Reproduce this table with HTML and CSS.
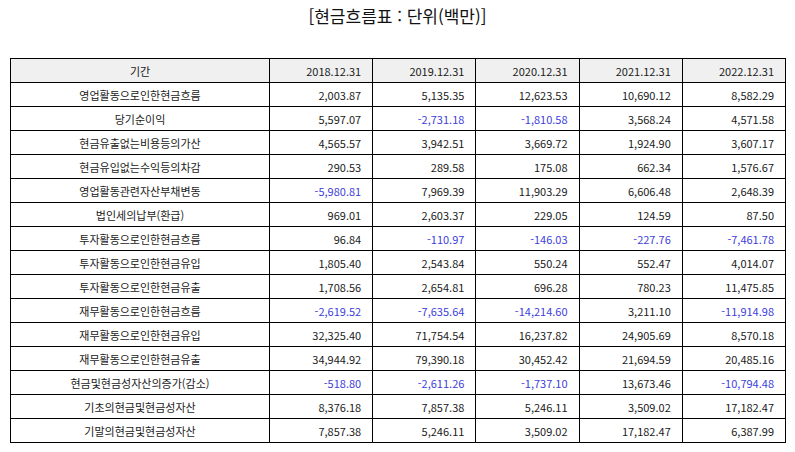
FILE: index.html
```html
<!DOCTYPE html>
<html lang="ko">
<head>
<meta charset="utf-8">
<title>현금흐름표</title>
<link rel="stylesheet" href="styles.css">
</head>
<body>
<h1 class="title">[현금흐름표 : 단위(백만)]</h1>
<table class="cf">
<thead>
<tr><th class="label">기간</th><th>2018.12.31</th><th>2019.12.31</th><th>2020.12.31</th><th>2021.12.31</th><th>2022.12.31</th></tr>
</thead>
<tbody>
<tr><td class="label">영업활동으로인한현금흐름</td><td>2,003.87</td><td>5,135.35</td><td>12,623.53</td><td>10,690.12</td><td>8,582.29</td></tr>
<tr><td class="label">당기순이익</td><td>5,597.07</td><td class="neg">-2,731.18</td><td class="neg">-1,810.58</td><td>3,568.24</td><td>4,571.58</td></tr>
<tr><td class="label">현금유출없는비용등의가산</td><td>4,565.57</td><td>3,942.51</td><td>3,669.72</td><td>1,924.90</td><td>3,607.17</td></tr>
<tr><td class="label">현금유입없는수익등의차감</td><td>290.53</td><td>289.58</td><td>175.08</td><td>662.34</td><td>1,576.67</td></tr>
<tr><td class="label">영업활동관련자산부채변동</td><td class="neg">-5,980.81</td><td>7,969.39</td><td>11,903.29</td><td>6,606.48</td><td>2,648.39</td></tr>
<tr><td class="label">법인세의납부(환급)</td><td>969.01</td><td>2,603.37</td><td>229.05</td><td>124.59</td><td>87.50</td></tr>
<tr><td class="label">투자활동으로인한현금흐름</td><td>96.84</td><td class="neg">-110.97</td><td class="neg">-146.03</td><td class="neg">-227.76</td><td class="neg">-7,461.78</td></tr>
<tr><td class="label">투자활동으로인한현금유입</td><td>1,805.40</td><td>2,543.84</td><td>550.24</td><td>552.47</td><td>4,014.07</td></tr>
<tr><td class="label">투자활동으로인한현금유출</td><td>1,708.56</td><td>2,654.81</td><td>696.28</td><td>780.23</td><td>11,475.85</td></tr>
<tr><td class="label">재무활동으로인한현금흐름</td><td class="neg">-2,619.52</td><td class="neg">-7,635.64</td><td class="neg">-14,214.60</td><td>3,211.10</td><td class="neg">-11,914.98</td></tr>
<tr><td class="label">재무활동으로인한현금유입</td><td>32,325.40</td><td>71,754.54</td><td>16,237.82</td><td>24,905.69</td><td>8,570.18</td></tr>
<tr><td class="label">재무활동으로인한현금유출</td><td>34,944.92</td><td>79,390.18</td><td>30,452.42</td><td>21,694.59</td><td>20,485.16</td></tr>
<tr><td class="label">현금및현금성자산의증가(감소)</td><td class="neg">-518.80</td><td class="neg">-2,611.26</td><td class="neg">-1,737.10</td><td>13,673.46</td><td class="neg">-10,794.48</td></tr>
<tr><td class="label">기초의현금및현금성자산</td><td>8,376.18</td><td>7,857.38</td><td>5,246.11</td><td>3,509.02</td><td>17,182.47</td></tr>
<tr><td class="label">기말의현금및현금성자산</td><td>7,857.38</td><td>5,246.11</td><td>3,509.02</td><td>17,182.47</td><td>6,387.99</td></tr>
</tbody>
</table>
</body>
</html>
```
FILE: styles.css
```css
html, body {
  margin: 0;
  padding: 0;
  background: #ffffff;
  color: #1a1a1a;
  font-family: "Noto Sans CJK KR", "Noto Sans", sans-serif;
}
.title {
  margin: 0;
  padding-top: 5px;
  height: 58px;
  box-sizing: border-box;
  text-align: center;
  font-size: 17px;
  line-height: 22px;
  font-weight: normal;
  color: #111111;
}
.cf {
  margin: 0 0 0 10px;
  width: 776px;
  border-collapse: collapse;
  table-layout: fixed;
  font-size: 11px;
}
.cf tr {
  height: 24px;
}
.cf th, .cf td {
  border: 1px solid #000000;
  padding: 0 11px 0 4px;
  text-align: right;
  font-weight: normal;
  line-height: 14px;
  white-space: nowrap;
}
.cf th {
  background: #f0f0f0;
}
.cf .label {
  width: 250px;
  text-align: center;
  padding: 0 4px;
}
.cf .neg {
  color: #4040dc;
}
```
